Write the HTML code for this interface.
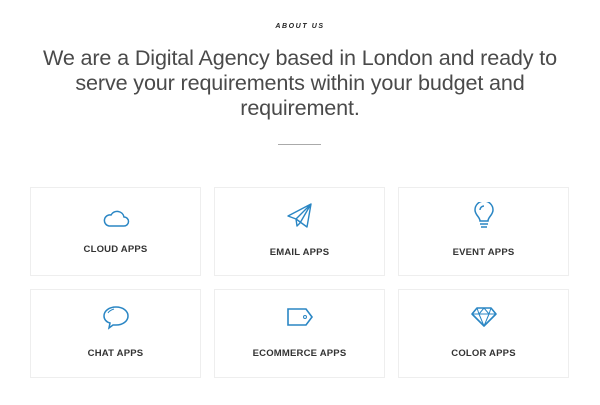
<!DOCTYPE html>
<html><head><style>
body{margin:0;width:600px;height:405px;background:#fff;font-family:"Liberation Sans",sans-serif;position:relative;overflow:hidden}
.about{position:absolute;top:23px;left:0;width:600px;text-align:center;font-size:7px;font-weight:bold;font-style:italic;letter-spacing:1.6px;color:#222}
h1{position:absolute;top:45px;left:0;width:600px;margin:0;text-align:center;font-weight:normal;font-size:21.6px;line-height:25px;color:#4a4a4a;letter-spacing:-0.15px}
.div{position:absolute;top:144px;left:278px;width:43px;height:1px;background:#aaa}
.box{position:absolute;width:171px;height:89px;border:1px solid #eee;box-sizing:border-box}
.box svg{position:absolute;left:50%;transform:translateX(-50%)}
.lbl{position:absolute;left:0;width:100%;text-align:center;font-size:9.5px;font-weight:bold;color:#333;letter-spacing:0.2px}
</style></head><body>
<div class="about">ABOUT US</div>
<h1>We are a Digital Agency based in London and ready to<br>serve your requirements within your budget and<br>requirement.</h1>
<div class="div"></div>

<div class="box" style="left:30px;top:187px">
<svg style="top:20px" width="28" height="20" viewBox="0 0 28 20" fill="none" stroke="#2a86c4" stroke-width="1.5"><path d="M7 18h15a4.5 4.5 0 0 0 0-9 7 7 0 0 0-13-2 5.5 5.5 0 0 0-2 11z"/></svg>
<div class="lbl" style="top:56px">CLOUD APPS</div></div>

<div class="box" style="left:214px;top:187px">
<svg style="top:14px" width="28" height="28" viewBox="0 0 28 28" fill="none" stroke="#2a86c4" stroke-width="1.4" stroke-linejoin="round"><path d="M25 2L2 14l8 3zM25 2L10 17l11 8zM25 2L14 21M10 17l1 7 3-3"/></svg>
<div class="lbl" style="top:59px">EMAIL APPS</div></div>

<div class="box" style="left:398px;top:187px">
<svg style="top:14px" width="22" height="28" viewBox="0 0 22 28" fill="none" stroke="#2a86c4" stroke-width="1.5"><path d="M7 19c0-4-5-6-5-11a9 9 0 0 1 18 0c0 5-5 7-5 11zM7 22h8M8 25h6M7 8a4 4 0 0 1 4-4"/></svg>
<div class="lbl" style="top:59px">EVENT APPS</div></div>

<div class="box" style="left:30px;top:289px">
<svg style="top:14px" width="28" height="26" viewBox="0 0 28 26" fill="none" stroke="#2a86c4" stroke-width="1.5"><path d="M8 19c-4-1-6-4-6-7 0-5 5-9 12-9s12 4 12 9-5 9-12 9c-1 0-2 0-3 0l-4 3z"/><path d="M6 9c1-2 3-3 6-4" stroke-width="1"/></svg>
<div class="lbl" style="top:58px">CHAT APPS</div></div>

<div class="box" style="left:214px;top:289px">
<svg style="top:16px" width="30" height="22" viewBox="0 0 30 22" fill="none" stroke="#2a86c4" stroke-width="1.6"><path d="M3 3h18l6 8-6 8H3z"/><circle cx="20" cy="11" r="1.5" stroke-width="1"/></svg>
<div class="lbl" style="top:58px">ECOMMERCE APPS</div></div>

<div class="box" style="left:398px;top:289px">
<svg style="top:16px" width="28" height="22" viewBox="0 0 28 22" fill="none" stroke="#2a86c4" stroke-width="1.6" stroke-linejoin="round"><path d="M7 2h14l5 6-12 12L2 8z"/><path d="M2 8h24M9 8l5 12 5-12M7 2l2 6 5-6 5 6 2-6" stroke-width="1"/></svg>
<div class="lbl" style="top:58px">COLOR APPS</div></div>
</body></html>
